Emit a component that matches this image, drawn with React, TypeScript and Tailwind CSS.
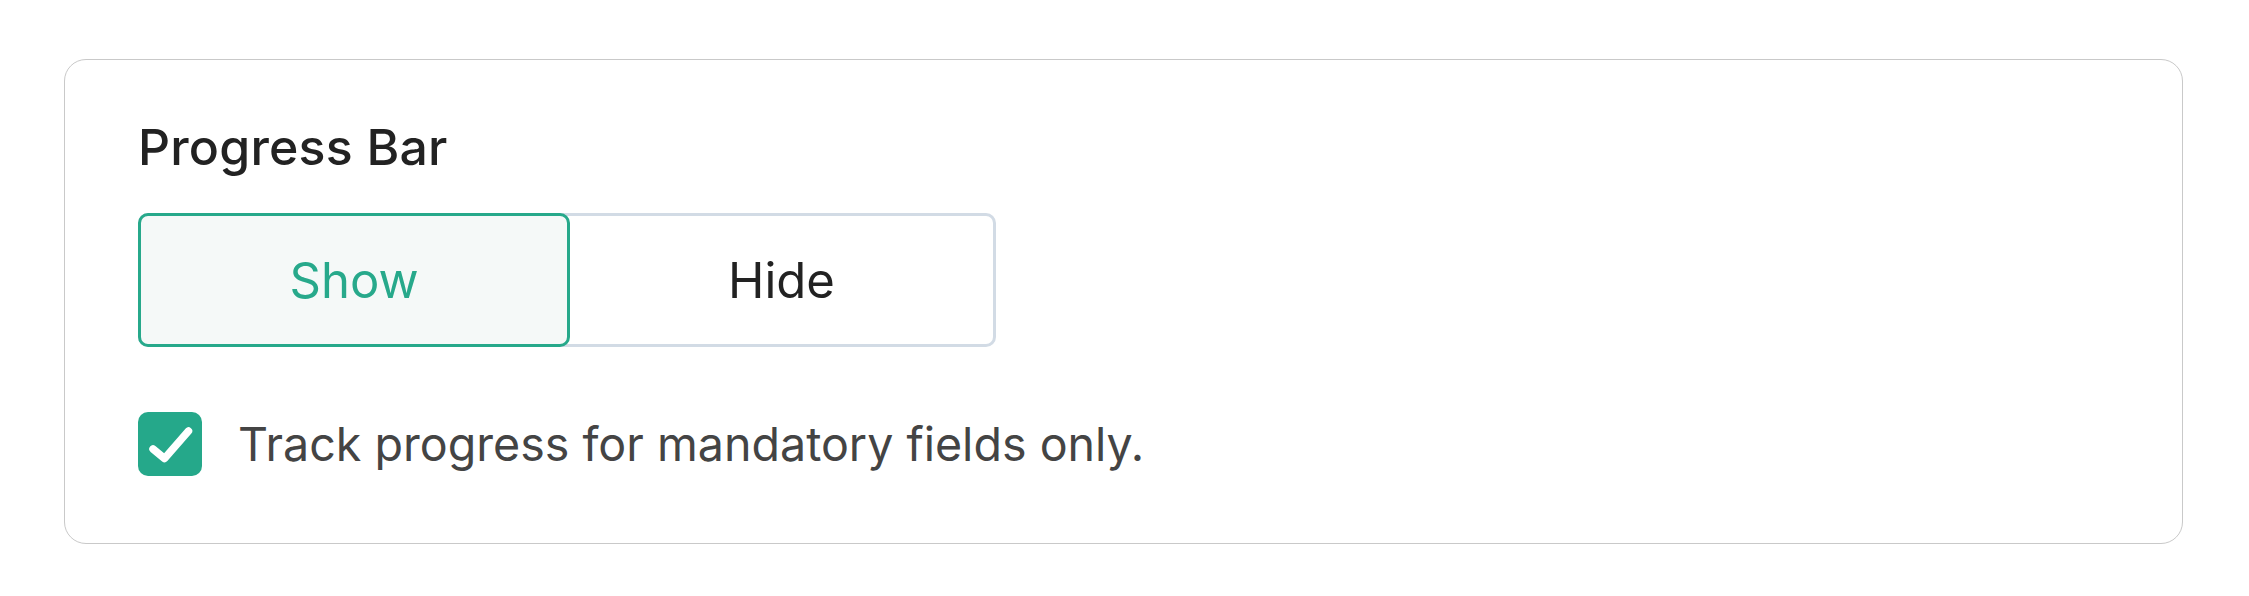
export default function App() {
  return (
    <div className="min-h-screen bg-white pt-[59px] pl-[64px] font-['Inter','Noto_Sans',sans-serif]">
      <div className="w-[2119px] h-[485px] rounded-[22px] border border-[#c9c9c9] pl-[73px] pt-[57px]">
        <h2 className="text-[50px] leading-[60px] font-medium tracking-[0.2px] text-[#222222]">Progress Bar</h2>

        <div className="mt-[36px] flex h-[134px] w-[858px] rounded-[10px] border-[3px] border-[#d2dbe5]">
          <button className="-my-[3px] -ml-[3px] w-[432px] rounded-[10px] border-[3px] border-[#27a98b] bg-[#f5f9f8] text-[49px] leading-none text-[#27a98b]">
            Show
          </button>
          <button className="flex-1 text-[49px] leading-none text-[#222222]">Hide</button>
        </div>

        <label className="mt-[65px] flex items-center gap-[36px]">
          <span className="flex h-[64px] w-[64px] items-center justify-center rounded-[10px] bg-[#25a88a]">
            <svg width="64" height="64" viewBox="0 0 64 64" fill="none">
              <path d="M15 37L26.5 46.5L50.5 19" stroke="white" strokeWidth="7.5" strokeLinecap="round" strokeLinejoin="round" />
            </svg>
          </span>
          <span className="text-[46.6px] leading-[56px] text-[#444444]">Track progress for mandatory fields only.</span>
        </label>
      </div>
    </div>
  );
}
